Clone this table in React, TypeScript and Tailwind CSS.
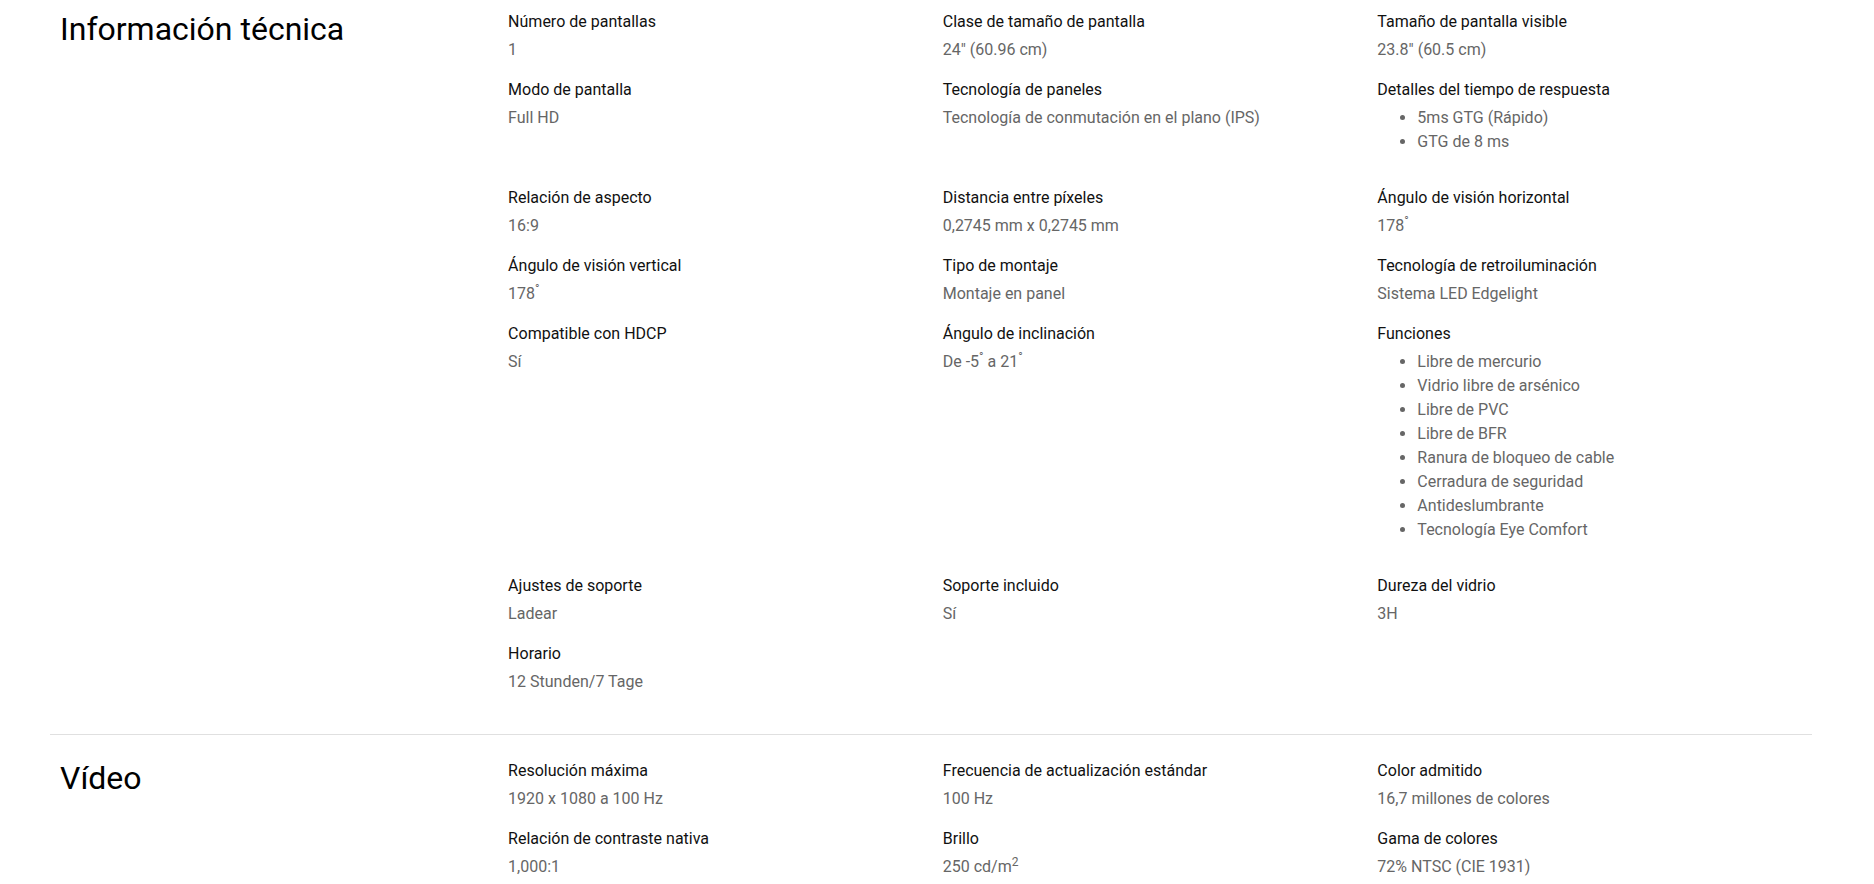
import type { ReactNode } from "react";

type Spec = {
  label: string;
  value?: ReactNode;
  items?: string[];
};

type Section = {
  title: string;
  specs: Spec[];
};

const deg = <sup>°</sup>;

const sections: Section[] = [
  {
    title: "Información técnica",
    specs: [
      { label: "Número de pantallas", value: "1" },
      { label: "Clase de tamaño de pantalla", value: '24" (60.96 cm)' },
      { label: "Tamaño de pantalla visible", value: '23.8" (60.5 cm)' },
      { label: "Modo de pantalla", value: "Full HD" },
      {
        label: "Tecnología de paneles",
        value: "Tecnología de conmutación en el plano (IPS)",
      },
      {
        label: "Detalles del tiempo de respuesta",
        items: ["5ms GTG (Rápido)", "GTG de 8 ms"],
      },
      { label: "Relación de aspecto", value: "16:9" },
      { label: "Distancia entre píxeles", value: "0,2745 mm x 0,2745 mm" },
      { label: "Ángulo de visión horizontal", value: <>178{deg}</> },
      { label: "Ángulo de visión vertical", value: <>178{deg}</> },
      { label: "Tipo de montaje", value: "Montaje en panel" },
      { label: "Tecnología de retroiluminación", value: "Sistema LED Edgelight" },
      { label: "Compatible con HDCP", value: "Sí" },
      {
        label: "Ángulo de inclinación",
        value: (
          <>
            De -5{deg} a 21{deg}
          </>
        ),
      },
      {
        label: "Funciones",
        items: [
          "Libre de mercurio",
          "Vidrio libre de arsénico",
          "Libre de PVC",
          "Libre de BFR",
          "Ranura de bloqueo de cable",
          "Cerradura de seguridad",
          "Antideslumbrante",
          "Tecnología Eye Comfort",
        ],
      },
      { label: "Ajustes de soporte", value: "Ladear" },
      { label: "Soporte incluido", value: "Sí" },
      { label: "Dureza del vidrio", value: "3H" },
      { label: "Horario", value: "12 Stunden/7 Tage" },
    ],
  },
  {
    title: "Vídeo",
    specs: [
      { label: "Resolución máxima", value: "1920 x 1080 a 100 Hz" },
      { label: "Frecuencia de actualización estándar", value: "100 Hz" },
      { label: "Color admitido", value: "16,7 millones de colores" },
      { label: "Relación de contraste nativa", value: "1,000:1" },
      {
        label: "Brillo",
        value: (
          <>
            250 cd/m<sup>2</sup>
          </>
        ),
      },
      { label: "Gama de colores", value: "72% NTSC (CIE 1931)" },
    ],
  },
];

function SpecItem({ spec }: { spec: Spec }) {
  return (
    <div>
      <div className="text-[16px] leading-6 text-[#111]">{spec.label}</div>
      {spec.items ? (
        <ul className="mt-1 mb-4 list-disc pl-10 text-[16px] leading-6 text-[#666]">
          {spec.items.map((item) => (
            <li key={item}>{item}</li>
          ))}
        </ul>
      ) : (
        <div className="mt-1 text-[16px] leading-6 text-[#666]">
          {spec.value}
        </div>
      )}
    </div>
  );
}

export default function App() {
  return (
    <div className="min-h-screen bg-white font-['Roboto',sans-serif]">
      <div className="ml-[50px] w-[1762px]">
        {sections.map((section, i) => (
          <section
            key={section.title}
            className={
              i === 0
                ? "flex pt-[10px] pb-10"
                : "flex border-t border-[#e0e0e0] pt-6 pb-10"
            }
          >
            <div className="w-[26%] shrink-0 pl-[10px]">
              <h2 className="text-[32px] leading-[38px] font-normal text-black">
                {section.title}
              </h2>
            </div>
            <div className="grid flex-1 grid-cols-3 gap-y-4">
              {section.specs.map((spec) => (
                <SpecItem key={spec.label} spec={spec} />
              ))}
            </div>
          </section>
        ))}
      </div>
    </div>
  );
}
